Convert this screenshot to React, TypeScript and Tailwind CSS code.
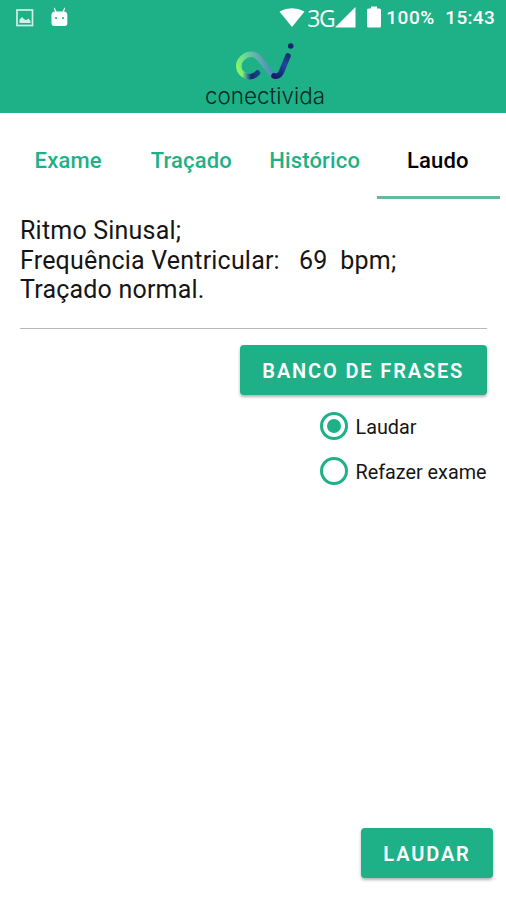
import React, { useState } from "react";

const tabs = ["Exame", "Traçado", "Histórico", "Laudo"];

const options = [
  { id: "laudar", label: "Laudar" },
  { id: "refazer", label: "Refazer exame" },
];

function StatusBar() {
  return (
    <div className="flex h-9 items-center justify-between pl-[16px] pr-[11px] text-white">
      <div className="flex items-center gap-[17px]">
        <svg width="18" height="18" viewBox="0 0 18 18" className="opacity-80">
          <rect x="1" y="1" width="15.5" height="15.5" fill="none" stroke="currentColor" strokeWidth="1.7" />
          <path d="M3.5 14V10.5L6 8L8.5 10.5L10.5 11L12.5 9.5L14.5 12V14Z" fill="currentColor" />
        </svg>
        <svg width="17" height="20" viewBox="0 0 17 20" className="-mt-[3px]">
          <path d="M3.5 0.5L5.5 4.5H11.5L13.5 0.5L14.2 1L13 4.6Q16.3 5 16.3 8V16.5Q16.3 19 13.5 19H3.5Q0.5 19 0.5 16.5V8Q0.5 5 4 4.6L2.8 1Z" fill="currentColor" />
          <circle cx="5" cy="11" r="1.1" className="fill-[#1eb188]" />
          <circle cx="12" cy="11" r="1.1" className="fill-[#1eb188]" />
        </svg>
      </div>
      <div className="flex items-center">
        <svg width="26" height="20" viewBox="0 0 26 20">
          <path d="M0.5 3.5Q13 -3 25.5 3.5L13 19Z" fill="currentColor" />
        </svg>
        <span className="ml-[2px] w-[28px] font-['Open_Sans',sans-serif] text-[23px] font-medium leading-5 tracking-[-1.4px]">3G</span>
        <svg width="21" height="21" viewBox="0 0 21 21" className="-mt-[2px]">
          <path d="M20.5 0V20.5H0Z" fill="currentColor" />
        </svg>
        <svg width="14" height="22" viewBox="0 0 14 22" className="-mt-[2px] ml-[11px]">
          <path d="M4 0.5H10V2.5H12.5Q14 2.5 14 4V20Q14 21.5 12.5 21.5H1.5Q0 21.5 0 20V4Q0 2.5 1.5 2.5H4Z" fill="currentColor" />
        </svg>
        <span className="ml-[5px] w-[48px] text-[19px] font-medium leading-5 tracking-[0.5px]">100%</span>
        <span className="ml-[11px] text-[19px] font-medium leading-5 tracking-[0.3px]">15:43</span>
      </div>
    </div>
  );
}

function Logo() {
  return (
    <svg width="130" height="70" viewBox="200 40 130 70">
      <defs>
        <linearGradient id="loop" gradientUnits="userSpaceOnUse" x1="238" y1="72" x2="272" y2="62">
          <stop offset="0" stopColor="#8cf565" />
          <stop offset="0.35" stopColor="#68d69a" />
          <stop offset="0.65" stopColor="#63aab0" />
          <stop offset="1" stopColor="#4387b8" />
        </linearGradient>
        <linearGradient id="tail" gradientUnits="userSpaceOnUse" x1="242" y1="74" x2="261" y2="74">
          <stop offset="0" stopColor="#8bf569" />
          <stop offset="0.3" stopColor="#347799" />
          <stop offset="0.5" stopColor="#152a72" />
          <stop offset="1" stopColor="#194b91" />
        </linearGradient>
        <linearGradient id="stem" gradientUnits="userSpaceOnUse" x1="276" y1="78" x2="288" y2="54">
          <stop offset="0" stopColor="#141c68" />
          <stop offset="0.6" stopColor="#20499e" />
          <stop offset="1" stopColor="#16296e" />
        </linearGradient>
      </defs>
      <g fill="none" strokeLinecap="round" strokeWidth="5.6">
        <path d="M245.5 75.5C237.5 72.5 237 63 242.5 58C248 53 255 52.5 260.5 59.5L270.5 72.5Q273 76 276 76" stroke="url(#loop)" />
        <path d="M243.5 74.5C248.5 78 254 77 257.5 73" stroke="url(#tail)" />
        <path d="M274 75.8C279.5 77.5 281 73 283 68L288 56" stroke="url(#stem)" />
      </g>
      <circle cx="290.7" cy="46" r="2.8" fill="#142769" />
      <text x="205" y="103.5" textLength="120" lengthAdjust="spacingAndGlyphs" fontFamily="Inter, sans-serif" fontSize="23" fontWeight="300" fill="#082a25">
        conectivida
      </text>
    </svg>
  );
}

export default function App() {
  const [tab, setTab] = useState("Laudo");
  const [selected, setSelected] = useState("laudar");

  return (
    <div className="flex h-[900px] w-[506px] flex-col overflow-hidden bg-white font-[Roboto,sans-serif]">
      <header className="h-[113px] bg-[#1eb188]">
        <StatusBar />
        <div className="flex justify-center pt-1 pl-6">
          <Logo />
        </div>
      </header>

      <nav className="grid h-[86px] grid-cols-4 pl-[7px] pr-[6px]">
        {tabs.map((name) => (
          <button
            key={name}
            onClick={() => setTab(name)}
            className={`border-b-[3px] pt-[11px] pr-px text-[22px] font-medium tracking-[0.15px] ${
              tab === name ? "border-[#65b99d] text-black" : "border-transparent text-[#1eb188]"
            }`}
          >
            {name}
          </button>
        ))}
      </nav>

      <main className="flex flex-1 flex-col items-end pl-[20px] pr-[19px]">
        <div className="h-[130px] w-full whitespace-pre border-b-[1.5px] border-[#b9b9b9] pt-[17px] text-[25px] leading-[29.5px] tracking-[0.2px] text-[#151515]">
          {"Ritmo Sinusal;\nFrequência Ventricular:   69  bpm;\nTraçado normal."}
        </div>

        <button className="mt-[15.5px] h-[50px] w-[247.5px] rounded-[4px] bg-[#1eb188] pt-[2px] text-[20px] font-semibold tracking-[1.85px] text-white shadow-[0_2px_3px_rgba(0,0,0,0.3)]">
          BANCO DE FRASES
        </button>

        <div className="mt-[8.5px] flex w-[167.5px] flex-col">
          {options.map((option) => (
            <button key={option.id} onClick={() => setSelected(option.id)} className="flex h-[45px] items-center gap-2">
              <span className="flex h-7 w-7 shrink-0 items-center justify-center rounded-full border-[3px] border-[#1eb188]">
                {selected === option.id && <span className="h-[14px] w-[14px] rounded-full bg-[#1eb188]" />}
              </span>
              <span className="whitespace-nowrap pt-[4px] text-[19.8px] text-[#151515]">{option.label}</span>
            </button>
          ))}
        </div>

        <button className="-mr-[6px] mt-auto mb-[22px] h-[50px] w-[132px] rounded-[4px] bg-[#1eb188] pt-px text-[20px] font-semibold tracking-[1.85px] text-white shadow-[0_2px_3px_rgba(0,0,0,0.3)]">
          LAUDAR
        </button>
      </main>
    </div>
  );
}
